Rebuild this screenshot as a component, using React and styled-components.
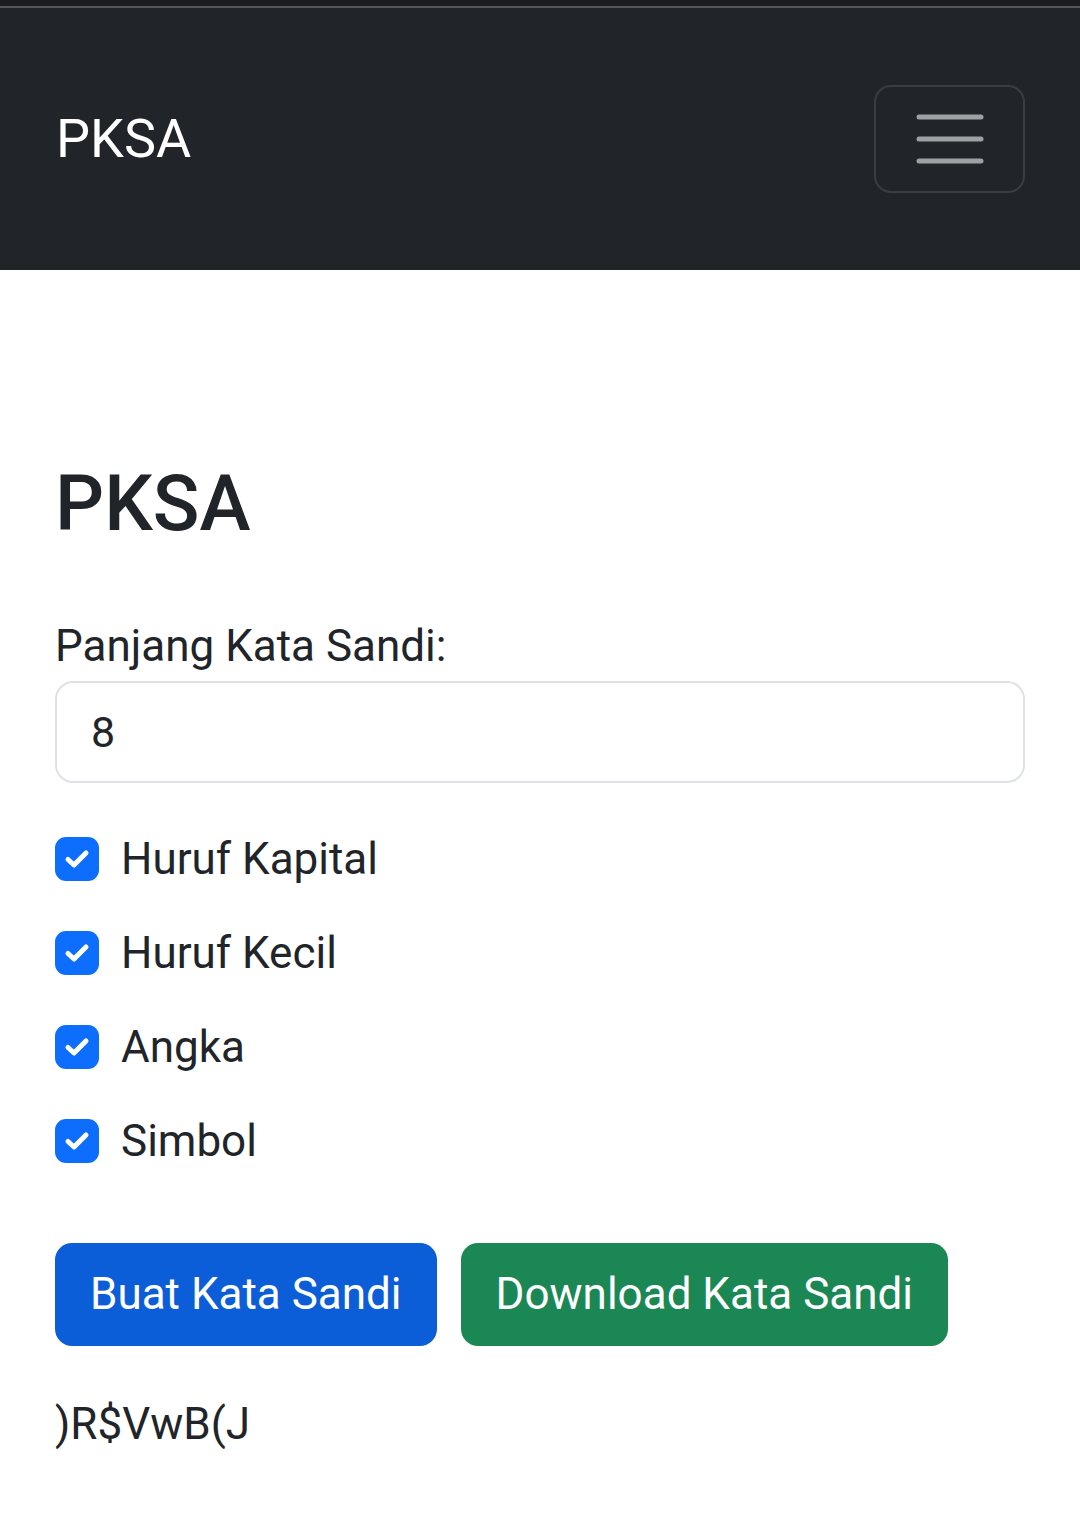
import React, { useState } from "react";
import styled, { createGlobalStyle } from "styled-components";

const GlobalStyle = createGlobalStyle`
  * { box-sizing: border-box; }
  body {
    margin: 0;
    background: #fff;
    font-family: Roboto, "Liberation Sans", sans-serif;
    color: #212529;
  }
`;

const TopStrip = styled.div`
  height: 8px;
  background: #1a1c1f;
  border-bottom: 2px solid #54575b;
`;

const Navbar = styled.nav`
  height: 262px;
  background: #212529;
  padding: 0 55px 0 56px;
  display: flex;
  align-items: center;
  justify-content: space-between;
`;

const Brand = styled.a`
  font-size: 54px;
  color: #fff;
  text-decoration: none;
  margin-top: -2px;
`;

const Toggler = styled.button`
  width: 151px;
  height: 108px;
  border: 2.5px solid #3a3d41;
  border-radius: 17px;
  background: transparent;
  display: flex;
  align-items: center;
  justify-content: center;
  padding: 0;
`;

const Main = styled.main`
  padding: 188px 55px 80px;
`;

const Title = styled.h1`
  margin: 0 0 63px;
  font-size: 77px;
  font-weight: 500;
  line-height: 1.2;
`;

const Label = styled.label`
  display: block;
  font-size: 44px;
  line-height: 1.5;
  margin-bottom: 2px;
`;

const Input = styled.input`
  display: block;
  width: 100%;
  height: 102px;
  border: 2.5px solid #dee2e6;
  border-radius: 18px;
  padding: 0 34px;
  font-family: inherit;
  font-size: 43px;
  color: #212529;
  outline: none;
`;

const Options = styled.div`
  margin-top: 43px;
  display: flex;
  flex-direction: column;
  gap: 29.5px;
`;

const Check = styled.label`
  display: flex;
  align-items: center;
  gap: 22px;
  font-size: 44px;
  line-height: 1.5;
  height: 64.5px;
`;

const Box = styled.span`
  width: 44px;
  height: 44px;
  border-radius: 11px;
  background: ${(p) => (p.$on ? "#0d6efd" : "#fff")};
  border: ${(p) => (p.$on ? "none" : "2.5px solid #dee2e6")};
  display: flex;
  align-items: center;
  justify-content: center;
  flex-shrink: 0;
`;

const Buttons = styled.div`
  margin-top: 70px;
  display: flex;
  gap: 24px;
`;

const Button = styled.button`
  height: 103px;
  padding: 0 35px;
  border: none;
  border-radius: 17px;
  background: ${(p) => p.$bg};
  color: #fff;
  font-family: inherit;
  font-size: 44px;
`;

const Output = styled.p`
  margin: 45px 0 0;
  font-size: 44px;
  line-height: 1.5;
`;

const Tick = () => (
  <svg width="26" height="22" viewBox="0 0 26 22">
    <path
      d="M4 11.5 L10 17 L22 5"
      fill="none"
      stroke="#fff"
      strokeWidth="5"
      strokeLinecap="round"
      strokeLinejoin="round"
    />
  </svg>
);

const Burger = () => (
  <svg width="68" height="50" viewBox="0 0 68 50">
    {[3, 25, 47].map((y) => (
      <line
        key={y}
        x1="3"
        x2="65"
        y1={y}
        y2={y}
        stroke="#9fa0a2"
        strokeWidth="5"
        strokeLinecap="round"
      />
    ))}
  </svg>
);

const options = ["Huruf Kapital", "Huruf Kecil", "Angka", "Simbol"];

export default function App() {
  const [length, setLength] = useState("8");
  const [checked, setChecked] = useState(options.map(() => true));

  return (
    <>
      <GlobalStyle />
      <TopStrip />
      <Navbar>
        <Brand href="#">PKSA</Brand>
        <Toggler aria-label="menu">
          <Burger />
        </Toggler>
      </Navbar>
      <Main>
        <Title>PKSA</Title>
        <Label htmlFor="len">Panjang Kata Sandi:</Label>
        <Input
          id="len"
          type="text"
          value={length}
          onChange={(e) => setLength(e.target.value)}
        />
        <Options>
          {options.map((name, i) => (
            <Check
              key={name}
              onClick={() =>
                setChecked(checked.map((c, j) => (j === i ? !c : c)))
              }
            >
              <Box $on={checked[i]}>{checked[i] && <Tick />}</Box>
              {name}
            </Check>
          ))}
        </Options>
        <Buttons>
          <Button $bg="#0b5ed7">Buat Kata Sandi</Button>
          <Button $bg="#1b8754">Download Kata Sandi</Button>
        </Buttons>
        <Output>)R$VwB(J</Output>
      </Main>
    </>
  );
}
